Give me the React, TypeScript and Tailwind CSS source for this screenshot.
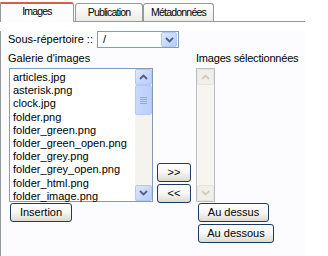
import React from 'react'

const files = [
  'articles.jpg',
  'asterisk.png',
  'clock.jpg',
  'folder.png',
  'folder_green.png',
  'folder_green_open.png',
  'folder_grey.png',
  'folder_grey_open.png',
  'folder_html.png',
  'folder_image.png',
]

function Arrow({ dir, color }: { dir: 'up' | 'down'; color: string }) {
  return (
    <svg width="9" height="6" viewBox="0 0 9 6">
      <path
        d={dir === 'up' ? 'M1 5 L4.5 1.5 L8 5' : 'M1 1 L4.5 4.5 L8 1'}
        fill="none"
        stroke={color}
        strokeWidth="1.8"
      />
    </svg>
  )
}

function ScrollBtn({ dir, disabled }: { dir: 'up' | 'down'; disabled?: boolean }) {
  return (
    <div
      className={`h-4 w-full shrink-0 rounded-[2px] border flex items-center justify-center ${
        disabled
          ? 'border-[#e6e4dc] bg-[#f0efe9]'
          : 'border-[#b4c8f6] bg-gradient-to-br from-[#dde7fe] to-[#b8ccf8]'
      }`}
    >
      <Arrow dir={dir} color={disabled ? '#cfcdc2' : '#4d6185'} />
    </div>
  )
}

function XpButton({ label, className }: { label: string; className: string }) {
  return (
    <button
      className={`h-[19px] rounded-[3px] border border-[#1c3c64] bg-gradient-to-b from-white via-[#f6f6f3] to-[#dcdad0] text-[11px] leading-none text-black ${className}`}
    >
      {label}
    </button>
  )
}

export default function App() {
  return (
    <div
      className="w-[328px] h-[256px] bg-white overflow-hidden text-black"
      style={{ fontFamily: '"Liberation Sans", Arial, sans-serif' }}
    >
      {/* Tabs */}
      <div className="w-[305px] h-[22px] flex items-end border-b border-[#919b9c]">
        <div className="relative h-[20px] w-[74px] -mb-px bg-[#fcfcfe] border-x border-[#919b9c] border-t-2 border-t-[#cf5f50] rounded-tr-[3px] flex items-center justify-center text-[10.5px] tracking-[-0.8px] pb-[3px]">
          Images
        </div>
        <div className="h-[18px] w-[68px] ml-[1px] rounded-t-[3px] border-x border-t border-[#919b9c] bg-gradient-to-b from-white to-[#ecebe5] flex items-center justify-center text-[10.5px] tracking-[-0.8px]">
          Publication
        </div>
        <div className="h-[18px] w-[71px] rounded-t-[3px] border-x border-t border-[#919b9c] bg-gradient-to-b from-white to-[#ecebe5] flex items-center justify-center text-[10.5px] tracking-[-0.8px]">
          Métadonnées
        </div>
      </div>

      {/* Panel */}
      <div className="w-[305px] h-[234px] border-l border-[#919b9c] bg-[#fcfcfe] pl-[7px] text-[11px]">
        <div className="mt-[9px] flex items-center h-[17px]">
          <span className="w-[89px]">Sous-répertoire ::</span>
          <div className="w-[82px] h-[17px] border border-[#7f9db9] bg-white flex items-center justify-between pl-[5px] pr-px">
            <span>/</span>
            <div className="w-[16px] h-[15px] rounded-[2px] border border-[#b4c8f6] bg-gradient-to-br from-[#dde7fe] to-[#b8ccf8] flex items-center justify-center">
              <Arrow dir="down" color="#4d6185" />
            </div>
          </div>
        </div>

        <div className="mt-[4px] flex h-[13px] leading-[13px]">
          <span className="w-[188px]">Galerie d'images</span>
          <span className="tracking-[-0.2px]">Images sélectionnées</span>
        </div>

        <div className="mt-[3px] flex items-end">
          <div className="ml-[1px] w-[144px] h-[134px] border border-[#7f9db9] bg-white flex">
            <div className="flex-1 pl-[3px] pt-[2px] leading-[13.2px]">
              {files.map((f) => (
                <div key={f}>{f}</div>
              ))}
            </div>
            <div className="w-[17px] flex flex-col bg-[#f4f3ee]">
              <ScrollBtn dir="up" />
              <div className="h-[30px] w-full rounded-[2px] border border-[#b4c8f6] bg-gradient-to-r from-[#c9d8fc] to-[#bccff9] flex flex-col items-center justify-center gap-[1px]">
                <div className="w-[7px] h-px bg-[#8ea9e8]" />
                <div className="w-[7px] h-px bg-[#8ea9e8]" />
                <div className="w-[7px] h-px bg-[#8ea9e8]" />
                <div className="w-[7px] h-px bg-[#8ea9e8]" />
              </div>
              <div className="flex-1" />
              <ScrollBtn dir="down" />
            </div>
          </div>
          <div className="ml-[4px] mb-[-1px] flex flex-col gap-[2px]">
            <XpButton label=">>" className="w-[34px]" />
            <XpButton label="<<" className="w-[34px]" />
          </div>
          <div className="ml-[5px] w-[19px] h-[134px] border border-[#b9bfc6] bg-[#f6f5f0] flex flex-col">
            <ScrollBtn dir="up" disabled />
            <div className="flex-1" />
            <ScrollBtn dir="down" disabled />
          </div>
        </div>

        <div className="mt-[1px] flex">
          <XpButton label="Insertion" className="ml-[2px] w-[62px]" />
          <div className="ml-[126px] flex flex-col gap-[2px]">
            <XpButton label="Au dessus" className="w-[71px]" />
            <XpButton label="Au dessous" className="w-[76px]" />
          </div>
        </div>
      </div>
    </div>
  )
}
